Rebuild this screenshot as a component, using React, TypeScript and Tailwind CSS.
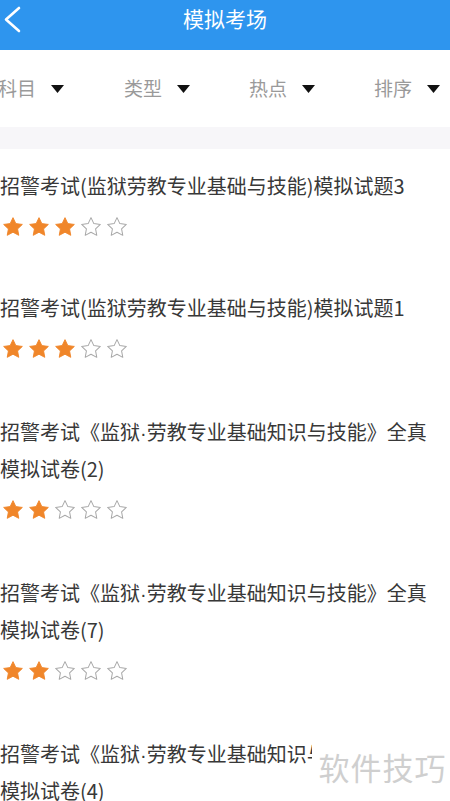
const FILTERS = ["科目", "类型", "热点", "排序"];

interface Exam {
  lines: string[];
  stars: number;
}

const EXAMS: Exam[] = [
  { lines: ["招警考试(监狱劳教专业基础与技能)模拟试题3"], stars: 3 },
  { lines: ["招警考试(监狱劳教专业基础与技能)模拟试题1"], stars: 3 },
  { lines: ["招警考试《监狱·劳教专业基础知识与技能》全真", "模拟试卷(2)"], stars: 2 },
  { lines: ["招警考试《监狱·劳教专业基础知识与技能》全真", "模拟试卷(7)"], stars: 2 },
  { lines: ["招警考试《监狱·劳教专业基础知识与技能》全真", "模拟试卷(4)"], stars: 2 },
];

function Star({ filled }: { filled: boolean }) {
  return (
    <svg width="22" height="22" viewBox="0 0 24 24">
      <path
        d="M12 1.8l3.1 6.5 7.1.9-5.2 4.9 1.3 7-6.3-3.4-6.3 3.4 1.3-7-5.2-4.9 7.1-.9z"
        fill={filled ? "#f0862a" : "none"}
        stroke={filled ? "#f0862a" : "#a8a8a8"}
        strokeWidth={filled ? 1 : 1.1}
        strokeLinejoin="round"
      />
    </svg>
  );
}

// the middle dot is narrow in the reference, so give it a latin font
function Line({ text }: { text: string }) {
  const parts = text.split("·");
  return (
    <span className="block h-[37px] whitespace-nowrap">
      {parts.map((p, i) => (
        <span key={i}>
          {i > 0 && <span className="font-['Liberation_Sans',sans-serif] leading-none">·</span>}
          {p}
        </span>
      ))}
    </span>
  );
}

export default function App() {
  return (
    <div className="relative h-[801px] w-[450px] overflow-hidden bg-white font-['Noto_Sans_CJK_SC',sans-serif]">
      <header className="relative flex h-[50px] items-center justify-center bg-[#2e95ee]">
        <svg className="absolute left-[3px] top-[6px]" width="20" height="28" viewBox="0 0 20 28">
          <polyline points="16,2 3,13.5 16,25" fill="none" stroke="white" strokeWidth="2.6" strokeLinecap="round" strokeLinejoin="round" />
        </svg>
        <h1 className="-mt-[13px] text-[21px] text-white">模拟考场</h1>
      </header>

      <nav className="grid h-[77px] grid-cols-[125px_125px_125px_75px] items-center">
        {FILTERS.map((f, i) => (
          <div key={f} className={`flex items-center gap-[15px] ${i === 0 ? "-ml-[2px]" : "-ml-[1px]"}`}>
            <span className="text-[19px] text-[#9a9a9a]">{f}</span>
            <svg width="13" height="8" viewBox="0 0 13 8">
              <polygon points="0,0 13,0 6.5,8" fill="#111" />
            </svg>
          </div>
        ))}
      </nav>
      <div className="h-[22px] bg-[#f7f6f9]" />

      <ul>
        {EXAMS.map((e, i) => (
          <li key={i} className={`pt-[18px] ${i === 0 ? "pb-[33px]" : "pb-[35px]"}`}>
            <p className="text-[20px] leading-[37px] text-[#383838]">
              {e.lines.map((l) => (
                <Line key={l} text={l} />
              ))}
            </p>
            <div className="mt-[12px] flex gap-[4px] pl-[2px]">
              {[0, 1, 2, 3, 4].map((n) => (
                <Star key={n} filled={n < e.stars} />
              ))}
            </div>
          </li>
        ))}
      </ul>

      <div className="absolute bottom-0 right-0 z-10 flex h-[64px] w-[138px] items-center justify-center bg-white pb-[4px] pl-[3px]">
        <span className="text-[31px] tracking-[1px] text-[#cfcfcf]">软件技巧</span>
      </div>
    </div>
  );
}
